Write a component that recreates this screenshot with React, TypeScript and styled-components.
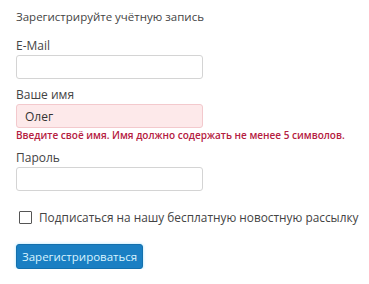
import { FC } from "react";
import styled, { createGlobalStyle } from "styled-components";

const Global = createGlobalStyle`
  html, body { margin: 0; padding: 0; background: #fff; }
  body { font-family: "Open Sans", "Noto Sans", sans-serif; color: #333; }
`;

const Form = styled.form`
  display: flex;
  flex-direction: column;
  padding: 8px 16px 0 16px;
  width: 369px;
  box-sizing: border-box;
`;

const Title = styled.div`
  font-size: 11.5px;
  line-height: 18px;
  color: #444;
  margin-bottom: 11px;
`;

const Field = styled.div<{ $gap?: number }>`
  display: flex;
  flex-direction: column;
  margin-bottom: ${(p) => p.$gap ?? 7}px;
`;

const Label = styled.label`
  font-size: 12px;
  line-height: 18px;
  color: #444;
`;

const Input = styled.input<{ $invalid?: boolean }>`
  box-sizing: border-box;
  width: 187px;
  height: 24px;
  margin: 0;
  padding: 0 8px;
  font-family: inherit;
  font-size: 12px;
  color: #333;
  border-radius: 3px;
  border: 1px solid ${(p) => (p.$invalid ? "#f3c9cd" : "#d4d4d4")};
  background: ${(p) => (p.$invalid ? "#fde9ea" : "#fff")};
  outline: none;
`;

const Error = styled.div`
  font-size: 10px;
  font-weight: 600;
  line-height: 14px;
  color: #b5203f;
  white-space: nowrap;
`;

const CheckRow = styled.label`
  display: flex;
  align-items: center;
  gap: 7px;
  margin: 17px 0 0 3px;
  font-size: 11.85px;
  line-height: 18px;
  color: #444;
  white-space: nowrap;
`;

const Box = styled.span`
  width: 11px;
  height: 11px;
  border: 1px solid #555;
  border-radius: 1px;
  background: #fff;
  flex: none;
`;

const Button = styled.button`
  align-self: flex-start;
  margin-top: 18px;
  height: 25px;
  padding: 0 5px;
  border: 1px solid #1470ad;
  border-radius: 3px;
  background: #1a7fc3;
  color: #d8f4ff;
  font-family: inherit;
  font-size: 11.5px;
  box-shadow: 0 0 3px rgba(80, 200, 255, 0.5);
`;

const App: FC = () => {
  return (
    <>
      <Global />
      <Form onSubmit={(e) => e.preventDefault()}>
        <Title>Зарегистрируйте учётную запись</Title>
        <Field>
          <Label>E-Mail</Label>
          <Input />
        </Field>
        <Field $gap={7}>
          <Label>Ваше имя</Label>
          <Input $invalid defaultValue="Олег" />
          <Error>Введите своё имя. Имя должно содержать не менее 5 символов.</Error>
        </Field>
        <Field $gap={0}>
          <Label>Пароль</Label>
          <Input type="password" />
        </Field>
        <CheckRow>
          <Box />
          Подписаться на нашу бесплатную новостную рассылку
        </CheckRow>
        <Button type="button">Зарегистрироваться</Button>
      </Form>
    </>
  );
};

export default App;
